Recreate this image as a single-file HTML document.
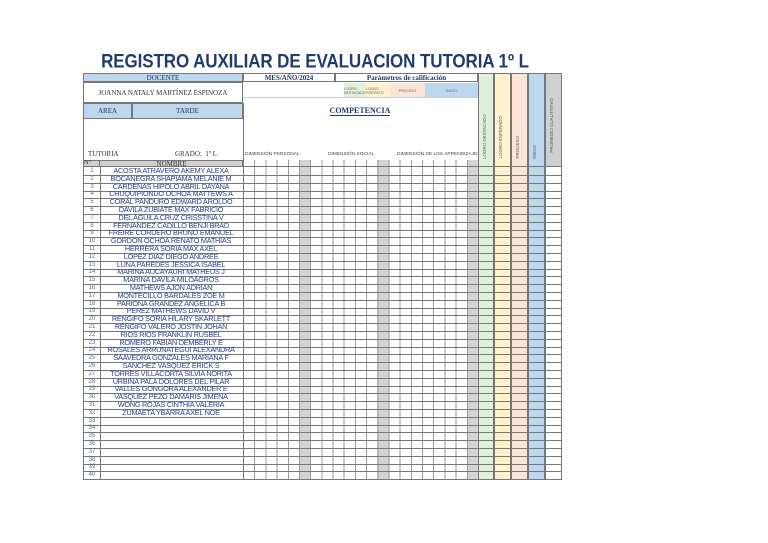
<!DOCTYPE html>
<html><head><meta charset="utf-8">
<style>
body{margin:0;width:768px;height:543px;background:#fff;position:relative;overflow:hidden;font-family:"Liberation Serif",serif;}
.a{position:absolute;box-sizing:border-box;}
.t{font-family:"Liberation Sans",sans-serif;font-weight:bold;color:#1f3b70;font-size:17px;left:0;width:630px;text-align:center;top:52px;transform:scaleY(1.12);letter-spacing:-0.1px;}
.c{display:flex;align-items:center;justify-content:center;color:#1f3864;}
.blue{background:#bdd7ee;}
.row{position:absolute;left:83px;height:8px;width:479px;border-bottom:1px solid #777;}
.n{position:absolute;left:0;width:16px;height:100%;border-left:1px solid #777;border-right:1px solid #777;font-family:"Liberation Sans",sans-serif;font-size:6px;color:#5a6a9a;text-align:center;line-height:8px;}
.nm{position:absolute;left:16px;width:144px;height:100%;font-family:"Liberation Sans",sans-serif;font-size:7.3px;letter-spacing:-0.25px;color:#2a3f8f;text-align:center;line-height:8px;white-space:nowrap;overflow:hidden;}
.vt{writing-mode:vertical-rl;transform:rotate(180deg);font-family:"Liberation Sans",sans-serif;font-size:4.5px;color:#555;position:absolute;bottom:6px;white-space:nowrap;}
.sm{font-family:"Liberation Sans",sans-serif;font-size:3.5px;color:#666;}
.dim{font-family:"Liberation Sans",sans-serif;font-size:4.8px;color:#444;position:absolute;top:152px;}
</style></head><body>
<div class="a t">REGISTRO AUXILIAR DE EVALUACION TUTORIA 1º L</div>

<div class="a" style="left:83px;top:73px;width:479px;height:94px;border:1px solid #777;"></div>
<div class="a c blue" style="left:83px;top:73px;width:160px;height:9px;font-size:7px;border:1px solid #777;">DOCENTE</div>
<div class="a c" style="left:243px;top:73px;width:92px;height:9px;font-size:7px;font-weight:bold;border:1px solid #777;">MES/AÑO/2024</div>
<div class="a c" style="left:335px;top:73px;width:143px;height:9px;font-size:7px;font-weight:bold;border:1px solid #777;">Parámetros de calificación</div>
<div class="a c" style="left:83px;top:82px;width:160px;height:21px;font-size:7px;color:#333;border:1px solid #777;">JOANNA NATALY MARTÍNEZ ESPINOZA</div>
<div class="a c sm" style="left:344px;top:83px;width:22px;height:15px;background:#e2efda;">LOGRO DESTACADO</div>
<div class="a c sm" style="left:366px;top:83px;width:24px;height:15px;background:#fff2cc;">LOGRO PREVISTO</div>
<div class="a c sm" style="left:390px;top:83px;width:35px;height:15px;background:#fce4d6;">PROCESO</div>
<div class="a c sm" style="left:425px;top:83px;width:53px;height:15px;background:#bdd7ee;">INICIO</div>
<div class="a c blue" style="left:83px;top:103px;width:49px;height:16px;font-size:7px;border:1px solid #777;">AREA</div>
<div class="a c blue" style="left:132px;top:103px;width:111px;height:16px;font-size:7px;border:1px solid #777;">TARDE</div>
<div class="a" style="left:243px;top:103px;width:1px;height:57px;background:#777;"></div>
<div class="a" style="left:243px;top:97px;width:235px;height:1px;background:#ccc;"></div>
<div class="a c" style="left:300px;top:104px;width:120px;height:14px;font-size:8px;font-weight:bold;"><span style="border-bottom:1px solid #1f3864">COMPETENCIA</span></div>
<div class="a" style="left:88px;top:150px;font-size:7px;color:#333;">TUTORIA</div>
<div class="a" style="left:175px;top:150px;font-size:7px;color:#333;">GRADO:&nbsp; 1º L</div>
<div class="dim" style="left:245px;">DIMENSIÓN PERSONAL</div>
<div class="dim" style="left:328px;">DIMENSIÓN SOCIAL</div>
<div class="dim" style="left:397px;">DIMENSIÓN DE LOS APRENDIZAJES</div>

<div class="a" style="left:478px;top:73px;width:16px;height:407px;background:#e2efda;border:1px solid #777;"></div>
<div class="a" style="left:494px;top:73px;width:17px;height:407px;background:#fff2cc;border:1px solid #777;"></div>
<div class="a" style="left:511px;top:73px;width:17px;height:407px;background:#fce4d6;border:1px solid #777;"></div>
<div class="a" style="left:528px;top:73px;width:17px;height:407px;background:#bdd7ee;border:1px solid #777;"></div>
<div class="a" style="left:545px;top:73px;width:17px;height:94px;background:#d0d0d0;border:1px solid #777;"></div>
<div class="a" style="left:545px;top:167px;width:17px;height:313px;border:1px solid #777;border-top:none;"></div>
<div class="a" style="left:478px;top:73px;width:84px;height:94px;">
<div class="vt" style="left:4px;bottom:8px">LOGRO DESTACADO</div>
<div class="vt" style="left:20px;bottom:8px">LOGRO ESPERADO</div>
<div class="vt" style="left:37px;bottom:8px">PROCESO</div>
<div class="vt" style="left:54px;bottom:8px">INICIO</div>
<div class="vt" style="left:71px;bottom:14px">PROMEDIO CUALITATIVO</div>
</div>

<div class="a" style="left:243px;top:160px;width:235px;height:320px;
background:linear-gradient(90deg,transparent 56px,#d4d4d4 56px,#d4d4d4 67px,transparent 67px,transparent 134px,#d4d4d4 134px,#d4d4d4 146px,transparent 146px,transparent 224px,#d4d4d4 224px);"></div>
<div class="a" style="left:243px;top:160px;width:235px;height:320px;
background:repeating-linear-gradient(90deg,#999 0,#999 1px,transparent 1px,transparent 11.19px);"></div>

<div class="a" style="left:83px;top:160px;width:160px;height:7px;background:#d0d0d0;border:1px solid #777;"></div>
<div class="a" style="left:84px;top:159px;font-size:6.5px;color:#333;">Nº</div>
<div class="a c" style="left:99px;top:160px;width:144px;height:7px;font-size:7px;color:#333;border-left:1px solid #777;">NOMBRE</div>
<div class="a" style="left:243px;top:166px;width:319px;height:1px;background:#777;"></div>

<div class="row" style="top:167px"><div class="n">1</div><div class="nm">ACOSTA ATRAVERO AKEMY ALEXA</div></div>
<div class="row" style="top:174.8px"><div class="n">2</div><div class="nm">BOCANEGRA SHAPIAMA MELANIE M</div></div>
<div class="row" style="top:182.6px"><div class="n">3</div><div class="nm">CARDENAS HIPOLO ABRIL DAYANA</div></div>
<div class="row" style="top:190.4px"><div class="n">4</div><div class="nm">CHUQUIPIONDO OCHOA MATTEWS A</div></div>
<div class="row" style="top:198.2px"><div class="n">5</div><div class="nm">CORAL PANDURO EDWARD AROLDO</div></div>
<div class="row" style="top:206px"><div class="n">6</div><div class="nm">DAVILA ZUBIATE MAX FABRICIO</div></div>
<div class="row" style="top:213.8px"><div class="n">7</div><div class="nm">DEL AGUILA CRUZ CRISSTINA V</div></div>
<div class="row" style="top:221.6px"><div class="n">8</div><div class="nm">FERNANDEZ CADILLO BENJI BRAD</div></div>
<div class="row" style="top:229.4px"><div class="n">9</div><div class="nm">FREIRE CORDERO BRUNO EMANUEL</div></div>
<div class="row" style="top:237.2px"><div class="n">10</div><div class="nm">GORDON OCHOA RENATO MATHIAS</div></div>
<div class="row" style="top:245px"><div class="n">11</div><div class="nm">HERRERA SORIA MAX AXEL</div></div>
<div class="row" style="top:252.8px"><div class="n">12</div><div class="nm">LOPEZ DIAZ DIEGO ANDREE</div></div>
<div class="row" style="top:260.6px"><div class="n">13</div><div class="nm">LUNA PAREDES JESSICA ISABEL</div></div>
<div class="row" style="top:268.4px"><div class="n">14</div><div class="nm">MARINA AUCAYAURI MATHEUS J</div></div>
<div class="row" style="top:276.2px"><div class="n">15</div><div class="nm">MARINA DAVILA MILOAGROS</div></div>
<div class="row" style="top:284px"><div class="n">16</div><div class="nm">MATHEWS AJON ADRIAN</div></div>
<div class="row" style="top:291.8px"><div class="n">17</div><div class="nm">MONTECILLO BARDALES ZOE M</div></div>
<div class="row" style="top:299.6px"><div class="n">18</div><div class="nm">PARIONA GRANDEZ ANGELICA B</div></div>
<div class="row" style="top:307.4px"><div class="n">19</div><div class="nm">PEREZ MATHEWS DAVID V</div></div>
<div class="row" style="top:315.2px"><div class="n">20</div><div class="nm">RENGIFO SORIA HILARY SKARLETT</div></div>
<div class="row" style="top:323px"><div class="n">21</div><div class="nm">RENGIFO VALERO JOSTIN JOHAN</div></div>
<div class="row" style="top:330.8px"><div class="n">22</div><div class="nm">RIOS RIOS FRANKLIN RUSBEL</div></div>
<div class="row" style="top:338.6px"><div class="n">23</div><div class="nm">ROMERO FABIAN DEMBERLY E</div></div>
<div class="row" style="top:346.4px"><div class="n">24</div><div class="nm">ROSALES ARRUNATEGUI ALEXANDRA</div></div>
<div class="row" style="top:354.2px"><div class="n">25</div><div class="nm">SAAVEDRA GONZALES MARIANA F</div></div>
<div class="row" style="top:362px"><div class="n">26</div><div class="nm">SANCHEZ VASQUEZ ERICK S</div></div>
<div class="row" style="top:369.8px"><div class="n">27</div><div class="nm">TORRES VILLACORTA SILVIA NORITA</div></div>
<div class="row" style="top:377.6px"><div class="n">28</div><div class="nm">URBINA PALA DOLORES DEL PILAR</div></div>
<div class="row" style="top:385.4px"><div class="n">29</div><div class="nm">VALLES GONGORA ALEXANDER E</div></div>
<div class="row" style="top:393.2px"><div class="n">30</div><div class="nm">VASQUEZ PEZO DAMARIS JIMENA</div></div>
<div class="row" style="top:401px"><div class="n">31</div><div class="nm">WONG ROJAS CINTHIA VALERIA</div></div>
<div class="row" style="top:408.8px"><div class="n">32</div><div class="nm">ZUMAETA YBARRA AXEL NOE</div></div>
<div class="row" style="top:416.6px"><div class="n">33</div><div class="nm"></div></div>
<div class="row" style="top:424.4px"><div class="n">34</div><div class="nm"></div></div>
<div class="row" style="top:432.2px"><div class="n">35</div><div class="nm"></div></div>
<div class="row" style="top:440px"><div class="n">36</div><div class="nm"></div></div>
<div class="row" style="top:447.8px"><div class="n">37</div><div class="nm"></div></div>
<div class="row" style="top:455.6px"><div class="n">38</div><div class="nm"></div></div>
<div class="row" style="top:463.4px"><div class="n">39</div><div class="nm"></div></div>
<div class="row" style="top:471.2px"><div class="n">40</div><div class="nm"></div></div>
<div class="a" style="left:243px;top:160px;width:1px;height:320px;background:#777;"></div>
<div class="a" style="left:478px;top:160px;width:1px;height:320px;background:#777;"></div>
</body></html>
